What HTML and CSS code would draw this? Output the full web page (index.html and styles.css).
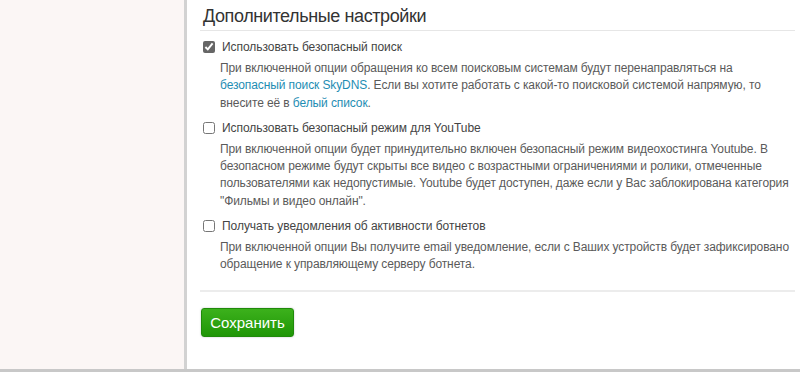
FILE: index.html
```html
<!DOCTYPE html>
<html lang="ru">
<head>
    <meta charset="UTF-8">
    <title>Дополнительные настройки</title>
    <link rel="stylesheet" href="styles.css">
</head>
<body>
<div class="page">
    <div class="sidebar"></div>
    <div class="main">
        <h2 class="title">Дополнительные настройки</h2>
        <div class="option">
            <label><input type="checkbox" checked> Использовать безопасный поиск</label>
            <p class="hint">При включенной опции обращения ко всем поисковым системам будут перенаправляться на <a href="#">безопасный поиск SkyDNS</a>. Если вы хотите работать с какой-то поисковой системой напрямую, то внесите её в <a href="#">белый список</a>.</p>
        </div>
        <div class="option">
            <label><input type="checkbox"> Использовать безопасный режим для YouTube</label>
            <p class="hint">При включенной опции будет принудительно включен безопасный режим видеохостинга Youtube. В безопасном режиме будут скрыты все видео с возрастными ограничениями и ролики, отмеченные пользователями как недопустимые. Youtube будет доступен, даже если у Вас заблокирована категория "Фильмы и видео онлайн".</p>
        </div>
        <div class="option">
            <label><input type="checkbox"> Получать уведомления об активности ботнетов</label>
            <p class="hint">При включенной опции Вы получите email уведомление, если с Ваших устройств будет зафиксировано обращение к управляющему серверу ботнета.</p>
        </div>
        <div class="actions">
            <button class="btn-save">Сохранить</button>
        </div>
    </div>
</div>
</body>
</html>
```

FILE: styles.css
```css
body { margin: 0; font-family: "Liberation Sans", sans-serif; color: #555555; background: #ffffff; }
.page { display: flex; height: 369px; border-bottom: 3px solid #c8c8c8; }
.sidebar { width: 184px; background-color: #fbf6f5; border-right: 3px solid #d2d2d2; }
.main { flex: 1; padding: 0 5px 0 13px; }
.title { margin: 0; padding: 6px 0 3px 3px; font-size: 18px; letter-spacing: -0.4px; font-weight: normal; color: #333333; border-bottom: 1px solid #e6e6e6; line-height: 21px; }
.option { padding: 7px 0 0 3px; }
.option label { display: flex; align-items: center; gap: 7px; font-size: 12px; letter-spacing: -0.05px; color: #444444; line-height: 18px; }
.option input { margin: 0; width: 12px; height: 12px; accent-color: #666666; }
.hint { margin: 4px 0 0 17px; font-size: 12px; letter-spacing: -0.1px; line-height: 17.3px; color: #5a5a5a; }
.hint a { color: #1e8db3; text-decoration: none; }
.actions { margin-top: 16px; padding-top: 16px; border-top: 2px solid #ececec; }
.btn-save { width: 93px; height: 29px; border: 1px solid #1f8a0a; border-radius: 3px; background: linear-gradient(#3cb11c, #1f9606); color: #ffffff; font-size: 15px; font-family: "Liberation Sans", sans-serif; box-shadow: 0 0 2px rgba(0,0,0,0.25); margin-left: 1px; }
```
